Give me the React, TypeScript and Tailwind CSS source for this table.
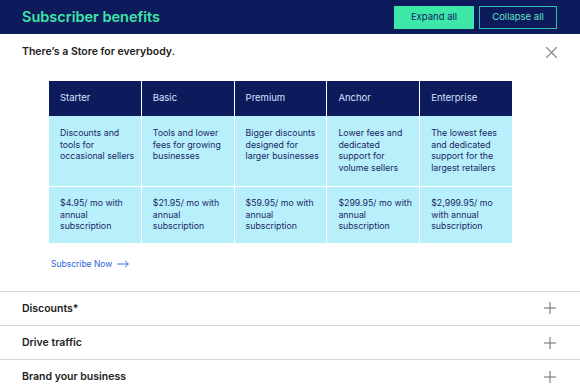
import React from 'react';

const font = { fontFamily: 'Inter, "Liberation Sans", sans-serif' };

const plans = [
  {
    name: 'Starter',
    desc: ['Discounts and', 'tools for', 'occasional sellers'],
    price: ['$4.95/ mo with', 'annual', 'subscription'],
  },
  {
    name: 'Basic',
    desc: ['Tools and lower', 'fees for growing', 'businesses'],
    price: ['$21.95/ mo with', 'annual', 'subscription'],
  },
  {
    name: 'Premium',
    desc: ['Bigger discounts', 'designed for', 'larger businesses'],
    price: ['$59.95/ mo with', 'annual', 'subscription'],
  },
  {
    name: 'Anchor',
    desc: ['Lower fees and', 'dedicated', 'support for', 'volume sellers'],
    price: ['$299.95/ mo with', 'annual', 'subscription'],
  },
  {
    name: 'Enterprise',
    desc: ['The lowest fees', 'and dedicated', 'support for the', 'largest retailers'],
    price: ['$2,999.95/ mo', 'with annual', 'subscription'],
  },
];

const Lines = ({ lines }: { lines: string[] }) => (
  <div className="text-[8.8px] leading-[11.7px] text-[#1d2766] whitespace-nowrap">
    {lines.map((l) => (
      <div key={l}>{l}</div>
    ))}
  </div>
);

const Plus = () => (
  <svg width="12" height="12" viewBox="0 0 12 12" fill="none" stroke="#666" strokeWidth="1">
    <path d="M6 0v12M0 6h12" />
  </svg>
);

const sections = ['Discounts*', 'Drive traffic', 'Brand your business'];

export default function App() {
  return (
    <div className="w-[580px] h-[388px] overflow-hidden bg-white" style={font}>
      <header className="h-[34px] bg-[#0d1a5c] flex items-center justify-between pl-[22px] pr-[23px]">
        <h1 className="text-[14.5px] font-semibold text-[#3de6a6]">Subscriber benefits</h1>
        <div className="flex gap-[5px]">
          <button className="w-[80px] h-[23px] bg-[#3de8a8] text-[#122060] text-[9.5px]">Expand all</button>
          <button className="w-[78px] h-[23px] border border-[#33bfa6] text-[#5fe0c4] text-[9.5px]">Collapse all</button>
        </div>
      </header>

      <div className="flex items-center justify-between pl-[22px] pr-[23px] h-[36px]">
        <p className="text-[10.5px] font-semibold text-[#222]">There’s a Store for everybody.</p>
        <svg width="11" height="11" viewBox="0 0 11 11" stroke="#777" strokeWidth="1.1">
          <path d="M0 0l11 11M11 0L0 11" />
        </svg>
      </div>

      <div className="pl-[49px] pt-[11px]">
        <div className="w-[463px] grid grid-cols-5 gap-x-px bg-white">
          {plans.map((p) => (
            <div key={p.name + 'h'} className="h-[35px] bg-[#0d1a5c] flex items-center pl-[11px] text-[9.5px] text-[#d9e2ff]">
              {p.name}
            </div>
          ))}
          {plans.map((p) => (
            <div key={p.name + 'd'} className="h-[70px] bg-[#b7f0fb] pl-[11px] pt-[11px]">
              <Lines lines={p.desc} />
            </div>
          ))}
          {plans.map((p) => (
            <div key={p.name + 'p'} className="h-[57px] bg-[#b7f0fb] border-t border-white pl-[11px] pt-[10px]">
              <Lines lines={p.price} />
            </div>
          ))}
        </div>
        <a className="mt-[15px] ml-[2px] flex items-center gap-[5px] text-[8.5px] text-[#2f5fe0]">
          Subscribe Now
          <svg width="12" height="8" viewBox="0 0 12 8" fill="none" stroke="#2f5fe0" strokeWidth="0.9">
            <path d="M0 4h11.3M8 0.8L11.3 4 8 7.2" />
          </svg>
        </a>
      </div>

      <div className="mt-[20px]">
        {sections.map((s) => (
          <div key={s} className="h-[34.3px] border-t border-[#d6d6d6] flex items-center justify-between pl-[22px] pr-[24px]">
            <span className="text-[10.5px] font-semibold text-[#222]">{s}</span>
            <Plus />
          </div>
        ))}
      </div>
    </div>
  );
}
